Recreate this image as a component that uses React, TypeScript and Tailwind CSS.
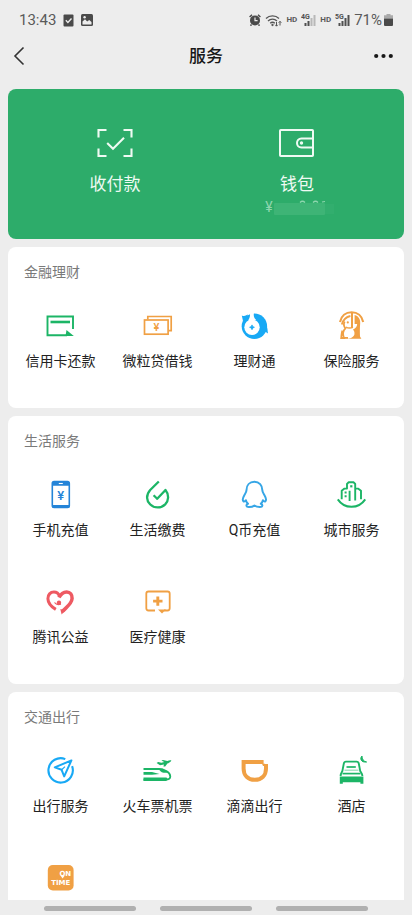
import type { ReactNode } from "react";

type Service = { label: string; icon: ReactNode };
type Section = { title: string; items: Service[] };

const GREEN = "#1cb566";
const ORANGE = "#f0a044";
const BLUE = "#18a9f5";
const RED = "#ee5a62";

function Icon({ children }: { children: ReactNode }) {
  return (
    <svg viewBox="0 0 32 32" className="size-8" fill="none" aria-hidden="true">
      {children}
    </svg>
  );
}

const CreditCardIcon = (
  <Icon>
    <path d="M28 19V6.5H2.5V25.2H22" stroke={GREEN} strokeWidth="1.9" />
    <path d="M5.5 12H25" stroke={GREEN} strokeWidth="2.6" />
    <path d="M21.5 20L28.8 26H20.5Z" fill={GREEN} />
  </Icon>
);

const LoanIcon = (
  <Icon>
    <path d="M5.8 9.5V6.5H29.2V20.7H26.5" stroke={ORANGE} strokeWidth="1.7" />
    <rect x="2.5" y="10" width="23.6" height="14.2" stroke={ORANGE} strokeWidth="1.7" />
    <text x="14.3" y="20.8" textAnchor="middle" fontSize="11" fontWeight="500" fill={ORANGE}>¥</text>
  </Icon>
);

const WealthIcon = (
  <Icon>
    <circle cx="15.4" cy="16.2" r="12.7" fill={BLUE} />
    <path d="M2.800 5.400C4.800 6.400 6.600 6 8.800 4.600L8 9L4 11Z" fill={BLUE} />
    <path d="M27.400 15.500C28.800 18 28.400 20.500 29 23.400L26 21.500Z" fill={BLUE} />
    <path d="M10.800 2L15.200 2C14.200 5 14.800 8 17.200 10L9 10.400C10.800 8.400 11.400 5.400 10.800 2Z" fill="#fff" />
    <circle cx="13" cy="17.300" r="7.7" fill="#fff" />
    <path d="M13 14.900L13.700 16.600L15.400 17.300L13.700 18L13 19.700L12.300 18L10.600 17.300L12.300 16.600Z" fill={BLUE} stroke={BLUE} strokeWidth="0.8" />
  </Icon>
);

const InsuranceIcon = (
  <Icon>
    <path d="M4 12C5.200 5.800 9.800 2.200 15.600 2.200S26 5.800 27.200 12" stroke={ORANGE} strokeWidth="2.1" />
    <path d="M5.800 14.500C7.200 9.800 10 6.800 14.400 6" stroke={ORANGE} strokeWidth="1.8" />
    <path d="M18.600 5C22.400 6 24.400 9 24.200 13C23.800 18 23.800 22 24 26.500L25.400 28.800H9C14.500 28.600 17.600 27.200 18.400 24.400C18.800 22 18 20.600 17 19.500C19.800 18.400 21 16.600 21.200 14H18.600Z" fill={ORANGE} />
    <path d="M16 3V18" stroke={ORANGE} strokeWidth="2" />
    <path d="M8.600 11.500C7.400 14 7.800 16.500 9.400 18.400C6.800 21 6.600 24.600 8 28H5.200C5.600 25 5.400 23 6.400 20.600" stroke={ORANGE} strokeWidth="1.8" />
    <path d="M5 27.900H12" stroke={ORANGE} strokeWidth="1.8" />
    <circle cx="11.8" cy="12.4" r="1.1" fill={ORANGE} />
    <path d="M10 17C12 18.400 14 18.400 17 17.400" stroke={ORANGE} strokeWidth="1.5" />
  </Icon>
);

const PhoneIcon = (
  <Icon>
    <rect x="7.3" y="2.6" width="17" height="25.8" rx="1.8" stroke="#2484d8" strokeWidth="1.6" />
    <path d="M7 3H24.6V6.8H7ZM7 26H24.6V28.6H7Z" fill="#2484d8" />
    <path d="M13.8 4.5H17.8" stroke="#fff" strokeWidth="1.1" />
    <text x="15.8" y="21.2" textAnchor="middle" fontSize="13" fontWeight="500" fill="#2484d8">¥</text>
  </Icon>
);

const BillsIcon = (
  <Icon>
    <path d="M16.8 2.5L8.2 11C3.6 16.2 4.6 22 8 25.2C12.4 29.6 19.2 29.4 23.2 25.4C26.8 21.6 27.3 15.6 23.5 11L15.2 19.8L11.6 16.3" stroke={GREEN} strokeWidth="2.3" strokeLinejoin="round" />
  </Icon>
);

const QCoinIcon = (
  <Icon>
    <path d="M15.4 2.8C10.6 2.8 7.5 6.2 7.5 11C7.5 13.2 6.3 14.6 5.2 16.4C3.9 18.6 3.5 21.4 4.6 22.4C5.3 23 6.2 21.8 6.9 21.2C7.3 22.8 8 23.8 9 24.8C6.8 25.4 6.8 28 10 28C12.4 28 14 27.6 15.4 26.6C16.8 27.6 18.4 28 20.8 28C24 28 24 25.4 21.8 24.8C22.8 23.8 23.5 22.8 23.9 21.2C24.6 21.8 25.5 23 26.2 22.4C27.3 21.4 26.9 18.6 25.6 16.4C24.5 14.6 23.3 13.2 23.3 11C23.3 6.2 20.2 2.8 15.4 2.8Z" stroke="#36a6e6" strokeWidth="2" strokeLinejoin="round" />
  </Icon>
);

const CityIcon = (
  <Icon>
    <path d="M1.8 20.4C8.4 30.3 22.6 30.3 29.2 20.4" stroke={GREEN} strokeWidth="2" />
    <path d="M5.7 20.3V11.8L8.5 9.6H11V5L12.5 3.3H17.7L19.2 5V21.6" stroke={GREEN} strokeWidth="1.9" strokeLinejoin="round" />
    <path d="M19.2 9.6H22L25 11.8V20.3M13.6 22V11.8" stroke={GREEN} strokeWidth="1.9" strokeLinejoin="round" />
    <rect x="14.2" y="6.2" width="2.2" height="2.2" fill={GREEN} />
    <path d="M9.6 12.6V14.6M9.6 16.2V18.2" stroke={GREEN} strokeWidth="2" />
  </Icon>
);

const CharityIcon = (
  <Icon>
    <path d="M10.8 23.4C6.2 20.6 3 17.2 2.9 12.6C2.8 8.8 5.4 6 8.9 6C11.6 6 13.7 7.8 14.6 10.4" stroke={RED} strokeWidth="3" />
    <path d="M14 11.6C15.8 7.8 18.4 5.9 21.7 5.9C25.2 5.9 27.3 8.7 27.1 12.5C26.8 17.8 22 20.6 17.3 25.6" stroke={RED} strokeWidth="3.5" />
    <path d="M15.3 23L20.4 24.6L16.6 28.4Z" fill={RED} />
    <circle cx="14" cy="16.8" r="2.2" fill={RED} />
    <path d="M9.5 16.5C11 18.5 13.5 19 16 18" stroke={RED} strokeWidth="1.2" />
  </Icon>
);

const HealthIcon = (
  <Icon>
    <path d="M13 24.5H6.5Q4.3 24.5 4.3 22.3V7.7Q4.3 5.5 6.5 5.5H25.5Q27.7 5.5 27.7 7.7V22.3Q27.7 24.5 25.5 24.5H22" stroke={ORANGE} strokeWidth="1.8" />
    <path d="M16 23.6H24L20 27.6Z" fill={ORANGE} />
    <path d="M15.8 10.4V19.8M11.1 15.1H20.5" stroke={ORANGE} strokeWidth="2.9" />
  </Icon>
);

const TravelIcon = (
  <Icon>
    <path d="M20.3 4.1A12.2 12.2 0 1 0 27.1 11.2" stroke={BLUE} strokeWidth="2.1" />
    <path d="M26.4 5.4L9.8 12.4L16.6 14.8L19.2 21.4Z" stroke={BLUE} strokeWidth="2" strokeLinejoin="round" />
    <path d="M16.6 14.8L20 11.6" stroke={BLUE} strokeWidth="1.2" />
  </Icon>
);

const TrainIcon = (
  <Icon>
    <path d="M14.6 8L16.2 7L19.4 7.8L22.2 7L19.4 5.6L21 5L25.4 6C26.8 5.4 28.4 4.8 29.4 5.6C28.8 7.2 27 8 25.4 8.5L23.2 11.4L21.4 11.6L22 9.5L18 10.2Z" fill={GREEN} />
    <path d="M1.5 14H17C22.5 14.2 28.3 17.6 28.3 21.5C28.3 23.6 26.5 24.6 23.5 24.6H1.5" stroke={GREEN} strokeWidth="1.8" />
    <path d="M1.5 22.4H24.5L26 24.5L24 26H1.5ZM1.5 17H10L17.5 19L10 19.8H1.5Z" fill={GREEN} />
    <path d="M17 13.6H20.5L26 17.8H21.5C19 17.4 17.5 16 17 13.6Z" fill={GREEN} />
  </Icon>
);

const DidiIcon = (
  <Icon>
    <path d="M24.6 7H4.6V13.5C4.6 20.5 9 24.8 15.8 24.8C22.6 24.8 27 20.5 27 13.5V9" stroke={ORANGE} strokeWidth="4" />
    <path d="M23 8.8H26V11H24Z" fill={ORANGE} />
  </Icon>
);

const HotelIcon = (
  <Icon>
    <path d="M4.6 21C4.6 18.8 5.6 17.4 6.4 16L7.8 8.6Q8.2 6.6 10 6.6H20.6Q22.4 6.6 22.8 8.6L24.2 16C25 17.4 26.4 18.8 26.4 21" stroke={GREEN} strokeWidth="1.9" />
    <path d="M10.5 12H19.8" stroke={GREEN} strokeWidth="1.7" />
    <path d="M6.5 18.6H24.5" stroke={GREEN} strokeWidth="1.7" />
    <path d="M8.5 15.2H22.5" stroke={GREEN} strokeWidth="1.1" strokeOpacity="0.5" />
    <path d="M3.8 21.6H27.4V28.8H24.4V27.2H6.8V28.8H3.8Z" fill={GREEN} />
    <path d="M26 1C23.6 3.2 24.8 7.8 30.6 7C27.6 6.4 25.8 4 26 1Z" fill={GREEN} stroke={GREEN} />
  </Icon>
);

const OnTimeIcon = (
  <Icon>
    <rect x="2.8" y="3" width="25.8" height="25.4" rx="5" fill={ORANGE} />
    <text x="26.2" y="13.8" textAnchor="end" fontSize="7" fontWeight="700" fontFamily="DejaVu Sans" fill="#fff">ON</text>
    <path d="M15.4 13.6L17.6 16.4L19.8 13.6Z" fill="#fff" />
    <text x="15.8" y="23" textAnchor="middle" fontSize="7" fontWeight="700" fontFamily="DejaVu Sans" fill="#fff">TIME</text>
  </Icon>
);

const SECTIONS: Section[] = [
  {
    title: "金融理财",
    items: [
      { label: "信用卡还款", icon: CreditCardIcon },
      { label: "微粒贷借钱", icon: LoanIcon },
      { label: "理财通", icon: WealthIcon },
      { label: "保险服务", icon: InsuranceIcon },
    ],
  },
  {
    title: "生活服务",
    items: [
      { label: "手机充值", icon: PhoneIcon },
      { label: "生活缴费", icon: BillsIcon },
      { label: "Q币充值", icon: QCoinIcon },
      { label: "城市服务", icon: CityIcon },
      { label: "腾讯公益", icon: CharityIcon },
      { label: "医疗健康", icon: HealthIcon },
    ],
  },
  {
    title: "交通出行",
    items: [
      { label: "出行服务", icon: TravelIcon },
      { label: "火车票机票", icon: TrainIcon },
      { label: "滴滴出行", icon: DidiIcon },
      { label: "酒店", icon: HotelIcon },
      { label: "", icon: OnTimeIcon },
    ],
  },
];

function Signal({ label, bars }: { label: string; bars: number }) {
  return (
    <svg viewBox="0 0 15 14" className="h-3.5 w-[15px]" aria-hidden="true">
      <text x="0" y="6" fontSize="7" fontWeight="700" fill="#505050">{label}</text>
      {[3, 5, 8, 11].map((h, i) => (
        <rect key={h} x={3.5 + i * 3} y={13 - h} width="2" height={h} fill={i < bars ? "#505050" : "#b8b8b8"} />
      ))}
    </svg>
  );
}

function StatusBar() {
  return (
    <div className="flex h-10 shrink-0 items-center justify-between px-[19px] text-[15px] text-[#5a5a5a]">
      <div className="flex items-center gap-[7px]">
        <span>13:43</span>
        <svg viewBox="0 0 11 13" className="h-[13px] w-[11px]" aria-hidden="true">
          <rect x="0.5" y="0.5" width="10" height="12" rx="1" fill="#4a4a4a" />
          <path d="M2.8 6.3L4.9 8.4L8.5 4.6" stroke="#ededed" strokeWidth="1.4" fill="none" />
        </svg>
        <svg viewBox="0 0 12 12" className="size-3" aria-hidden="true">
          <rect width="12" height="12" rx="1.5" fill="#4a4a4a" />
          <path d="M1.5 7.5L4 5.2L6.2 7.6L8.2 6L10.5 8V10.5H1.5Z" fill="#ededed" />
          <circle cx="3.6" cy="3.2" r="1.2" fill="#ededed" />
        </svg>
      </div>
      <div className="flex items-center gap-1">
        <svg viewBox="0 0 12 12" className="size-3" aria-hidden="true">
          <circle cx="6" cy="6.4" r="5" fill="#4a4a4a" />
          <path d="M0.6 3L3 0.8M11.4 3L9 0.8M2.5 10.5L1.5 11.7M9.5 10.5L10.5 11.7" stroke="#4a4a4a" strokeWidth="1.5" />
          <path d="M6 3.5V6.7H8.6" stroke="#ededed" strokeWidth="1.2" fill="none" />
        </svg>
        <svg viewBox="0 0 17 13" className="h-[13px] w-[17px]" fill="none" stroke="#555" strokeWidth="1.3" aria-hidden="true">
          <path d="M1 4.5C4.5 1 10.5 1 14 4.5M3 7C5.6 4.5 9.4 4.5 12 7M5.2 9.3C6.6 8 8.4 8 9.8 9.3" />
          <circle cx="7.5" cy="11" r="0.5" />
          <path d="M11.5 8V12M10.2 10.8L11.5 12.2L12.8 10.8M15 11.5V7.5M13.7 8.7L15 7.3L16.3 8.7" strokeWidth="1" />
        </svg>
        <span className="text-[8px] font-bold">HD</span>
        <Signal label="4G" bars={2} />
        <span className="text-[8px] font-bold">HD</span>
        <Signal label="5G" bars={4} />
        <span>71%</span>
        <svg viewBox="0 0 9 12" className="-ml-0.5 h-3 w-[9px]" aria-hidden="true">
          <path d="M2.5 0H6.5V1.3H9V4.5H0V1.3H2.5Z" fill="#aaa" />
          <path d="M0 4.5H9V11Q9 12 8 12H1Q0 12 0 11Z" fill="#4a4a4a" />
        </svg>
      </div>
    </div>
  );
}

function Header() {
  return (
    <header className="grid h-8 shrink-0 grid-cols-3 items-center px-3 text-[#181818]">
      <button type="button" aria-label="返回" className="justify-self-start">
        <svg viewBox="0 0 14 20" className="h-5 w-3.5" fill="none" stroke="#333" strokeWidth="1.6" aria-hidden="true">
          <path d="M11.5 1.5L3 10L11.5 18.5" />
        </svg>
      </button>
      <h1 className="text-center text-[17px] leading-6 font-medium">服务</h1>
      <button type="button" aria-label="更多" className="justify-self-end">
        <svg viewBox="0 0 28 8" className="h-2 w-7" fill="#181818" aria-hidden="true">
          <circle cx="4.2" cy="4" r="2.1" />
          <circle cx="11.5" cy="4" r="2.1" />
          <circle cx="18.8" cy="4" r="2.1" />
        </svg>
      </button>
    </header>
  );
}

function PayCard() {
  return (
    <section className="grid h-[150px] shrink-0 grid-cols-2 rounded-lg bg-[#2dac6a] px-4 pt-10 text-[#effaf3]">
      <button type="button" className="flex flex-col items-center">
        <svg viewBox="0 0 36 28" className="h-7 w-9" fill="none" stroke="currentColor" strokeWidth="2.1" aria-hidden="true">
          <path d="M1.5 8.5V1H9.5M26.5 1H34.5V8.5M34.5 19.5V27H26.5M9.5 27H1.5V19.5" />
          <path d="M10.2 14L16 19.8L27 8.8" />
        </svg>
        <span className="mt-[15px] text-[17px] leading-6">收付款</span>
      </button>
      <button type="button" className="flex flex-col items-center">
        <svg viewBox="0 0 36 28" className="h-7 w-9" fill="none" stroke="currentColor" strokeWidth="2" aria-hidden="true">
          <rect x="1" y="1" width="33" height="26" rx="0.8" />
          <path d="M34 9.5H22.5C16.5 9.5 16.5 18.5 22.5 18.5H34" />
          <circle cx="22.5" cy="14" r="1.7" fill="currentColor" stroke="none" />
        </svg>
        <span className="mt-[15px] text-[17px] leading-6">钱包</span>
        {/* balance is masked */}
        <span className="mt-[3px] ml-1.5 flex items-center text-sm leading-4 text-[#8ed6ae]">
          ¥
          <svg viewBox="0 0 62 16" className="h-4 w-[62px]" aria-hidden="true">
            <rect x="1" y="4" width="51" height="12" rx="1" fill="#3eb476" />
            <rect x="52" y="5" width="9" height="10" fill="#32ae6e" />
            <path d="M27 3.500Q29.500 1 32 3.500M40 3.500Q42.500 1 45 3.500M49 3L52 2.500" stroke="#8ed6ae" strokeWidth="1.2" fill="none" />
          </svg>
        </span>
      </button>
    </section>
  );
}

function ServiceSection({ title, items }: Section) {
  return (
    <section className="shrink-0 rounded-lg bg-white px-1">
      <h2 className="h-[54px] px-3 pt-[15px] text-sm leading-5 text-[#7a7a7a]">{title}</h2>
      <div className="grid grid-cols-4">
        {items.map(({ label, icon }, i) => (
          <button key={i} type="button" className="flex h-[107px] flex-col items-center gap-[9px] pt-[9px]">
            {icon}
            {label && <span className="text-sm leading-5 whitespace-nowrap text-[#222]">{label}</span>}
          </button>
        ))}
      </div>
    </section>
  );
}

export default function App() {
  return (
    <div className="flex h-screen flex-col overflow-hidden bg-[#ededed] font-[Roboto,'Noto_Sans_CJK_SC',sans-serif]">
      <StatusBar />
      <Header />
      <main className="mt-[17px] flex min-h-0 flex-1 flex-col gap-2 overflow-hidden px-2">
        <PayCard />
        {SECTIONS.map((section) => (
          <ServiceSection key={section.title} {...section} />
        ))}
      </main>

      {/* gesture hints */}
      <div className="flex h-[15px] shrink-0 items-center justify-center gap-6 pt-0.5">
        <span className="h-[5px] w-[92px] rounded-full bg-[#b0b0b0]" />
        <span className="h-[5px] w-[92px] rounded-full bg-[#b0b0b0]" />
        <span className="h-[5px] w-[92px] rounded-full bg-[#b0b0b0]" />
      </div>
    </div>
  );
}
